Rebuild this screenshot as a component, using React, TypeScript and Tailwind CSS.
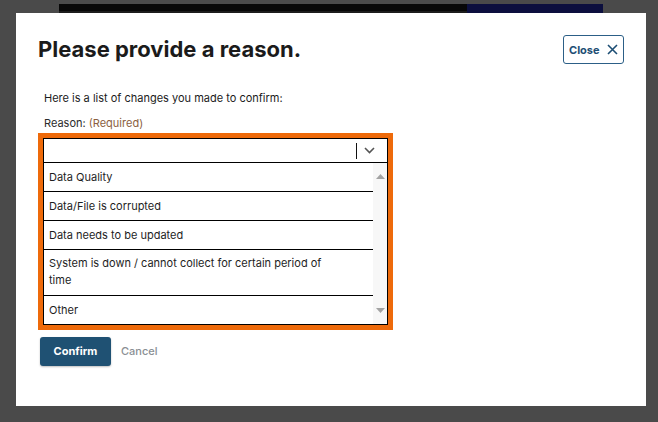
import React from "react";

const options = [
  "Data Quality",
  "Data/File is corrupted",
  "Data needs to be updated",
  "System is down / cannot collect for certain period of time",
  "Other",
];

export default function App() {
  return (
    <div
      className="w-[658px] h-[422px] bg-[#4a4a4a] overflow-hidden"
      style={{ fontFamily: "Inter, Roboto, 'Liberation Sans', sans-serif" }}
    >
      <div className="pt-[4px] pl-[59px] flex">
        <div className="w-[408px] h-[9px] flex flex-col">
          <div className="h-[7px] bg-[#070707]" />
          <div className="h-[2px] bg-[#1c1c1c]" />
        </div>
        <div className="w-[136px] h-[9px] bg-[#0c0f3e]" />
      </div>
      <div className="ml-[16px] w-[630px] h-[393px] bg-white px-[22px] pt-[22px]">
        <div className="flex items-start justify-between">
          <h1 className="text-[22px] leading-[28px] font-bold text-[#1b1b1b]">
            Please provide a reason.
          </h1>
          <button className="h-[29px] w-[61px] border-[1.5px] border-[#2c5f87] rounded-[3px] flex items-center pl-[5px] gap-[7px] text-[11px] leading-[14px] font-bold text-[#1d4e74]">
            <span className="pt-[1px]">Close</span>
            <svg width="11" height="11" viewBox="0 0 11 11" fill="none">
              <path d="M1 1 L10 10 M10 1 L1 10" stroke="#1d4e74" strokeWidth="1.6" />
            </svg>
          </button>
        </div>
        <p className="mt-[26px] ml-[6px] text-[11px] leading-[16px] text-[#1b1b1b]">
          Here is a list of changes you made to confirm:
        </p>
        <p className="mt-[9px] ml-[6px] text-[11px] leading-[16px] text-[#2b2b2b]">
          Reason: <span className="text-[#8c5f3f]">(Required)</span>
        </p>
        <div className="mt-[2px] w-[355px] border-[5px] border-[#ee6a0a]">
          <div className="border border-black">
            <div className="h-[24px] flex items-center justify-end border-b border-black pr-[12px]">
              <div className="w-[1.5px] h-[16px] bg-[#111]" />
              <svg className="ml-[7px]" width="11" height="7" viewBox="0 0 11 7" fill="none">
                <path d="M1 1 L5.5 5.5 L10 1" stroke="#555" strokeWidth="1.6" />
              </svg>
            </div>
            <div className="flex">
              <div className="flex-1">
                {options.map((o, i) => (
                  <div
                    key={o}
                    className={
                      "px-[5px] text-[11px] text-[#1e1e1e] " +
                      (i === 3
                        ? "leading-[17px] pt-[5px] pb-[6px] pr-[30px] "
                        : "leading-[16px] py-[6px] ") +
                      (i < options.length - 1 ? "border-b border-black" : "")
                    }
                  >
                    {o}
                  </div>
                ))}
              </div>
              <div className="w-[14px] bg-[#f7f7f7] flex flex-col items-center justify-between pt-[11px] pb-[11px]">
                <svg width="9" height="5" viewBox="0 0 9 5">
                  <path d="M0 5 L4.5 0 L9 5 Z" fill="#a3a3a3" />
                </svg>
                <svg width="9" height="5" viewBox="0 0 9 5">
                  <path d="M0 0 L4.5 5 L9 0 Z" fill="#a3a3a3" />
                </svg>
              </div>
            </div>
          </div>
        </div>
        <div className="mt-[7px] ml-[2px] flex items-center gap-[10px]">
          <button className="h-[29px] w-[71px] rounded-[3px] bg-[#1f5173] text-white text-[11px] font-bold shadow-[0_1px_2px_rgba(0,0,0,0.25)]">
            Confirm
          </button>
          <button className="text-[11px] font-medium text-[#8a8f94]">Cancel</button>
        </div>
      </div>
    </div>
  );
}
